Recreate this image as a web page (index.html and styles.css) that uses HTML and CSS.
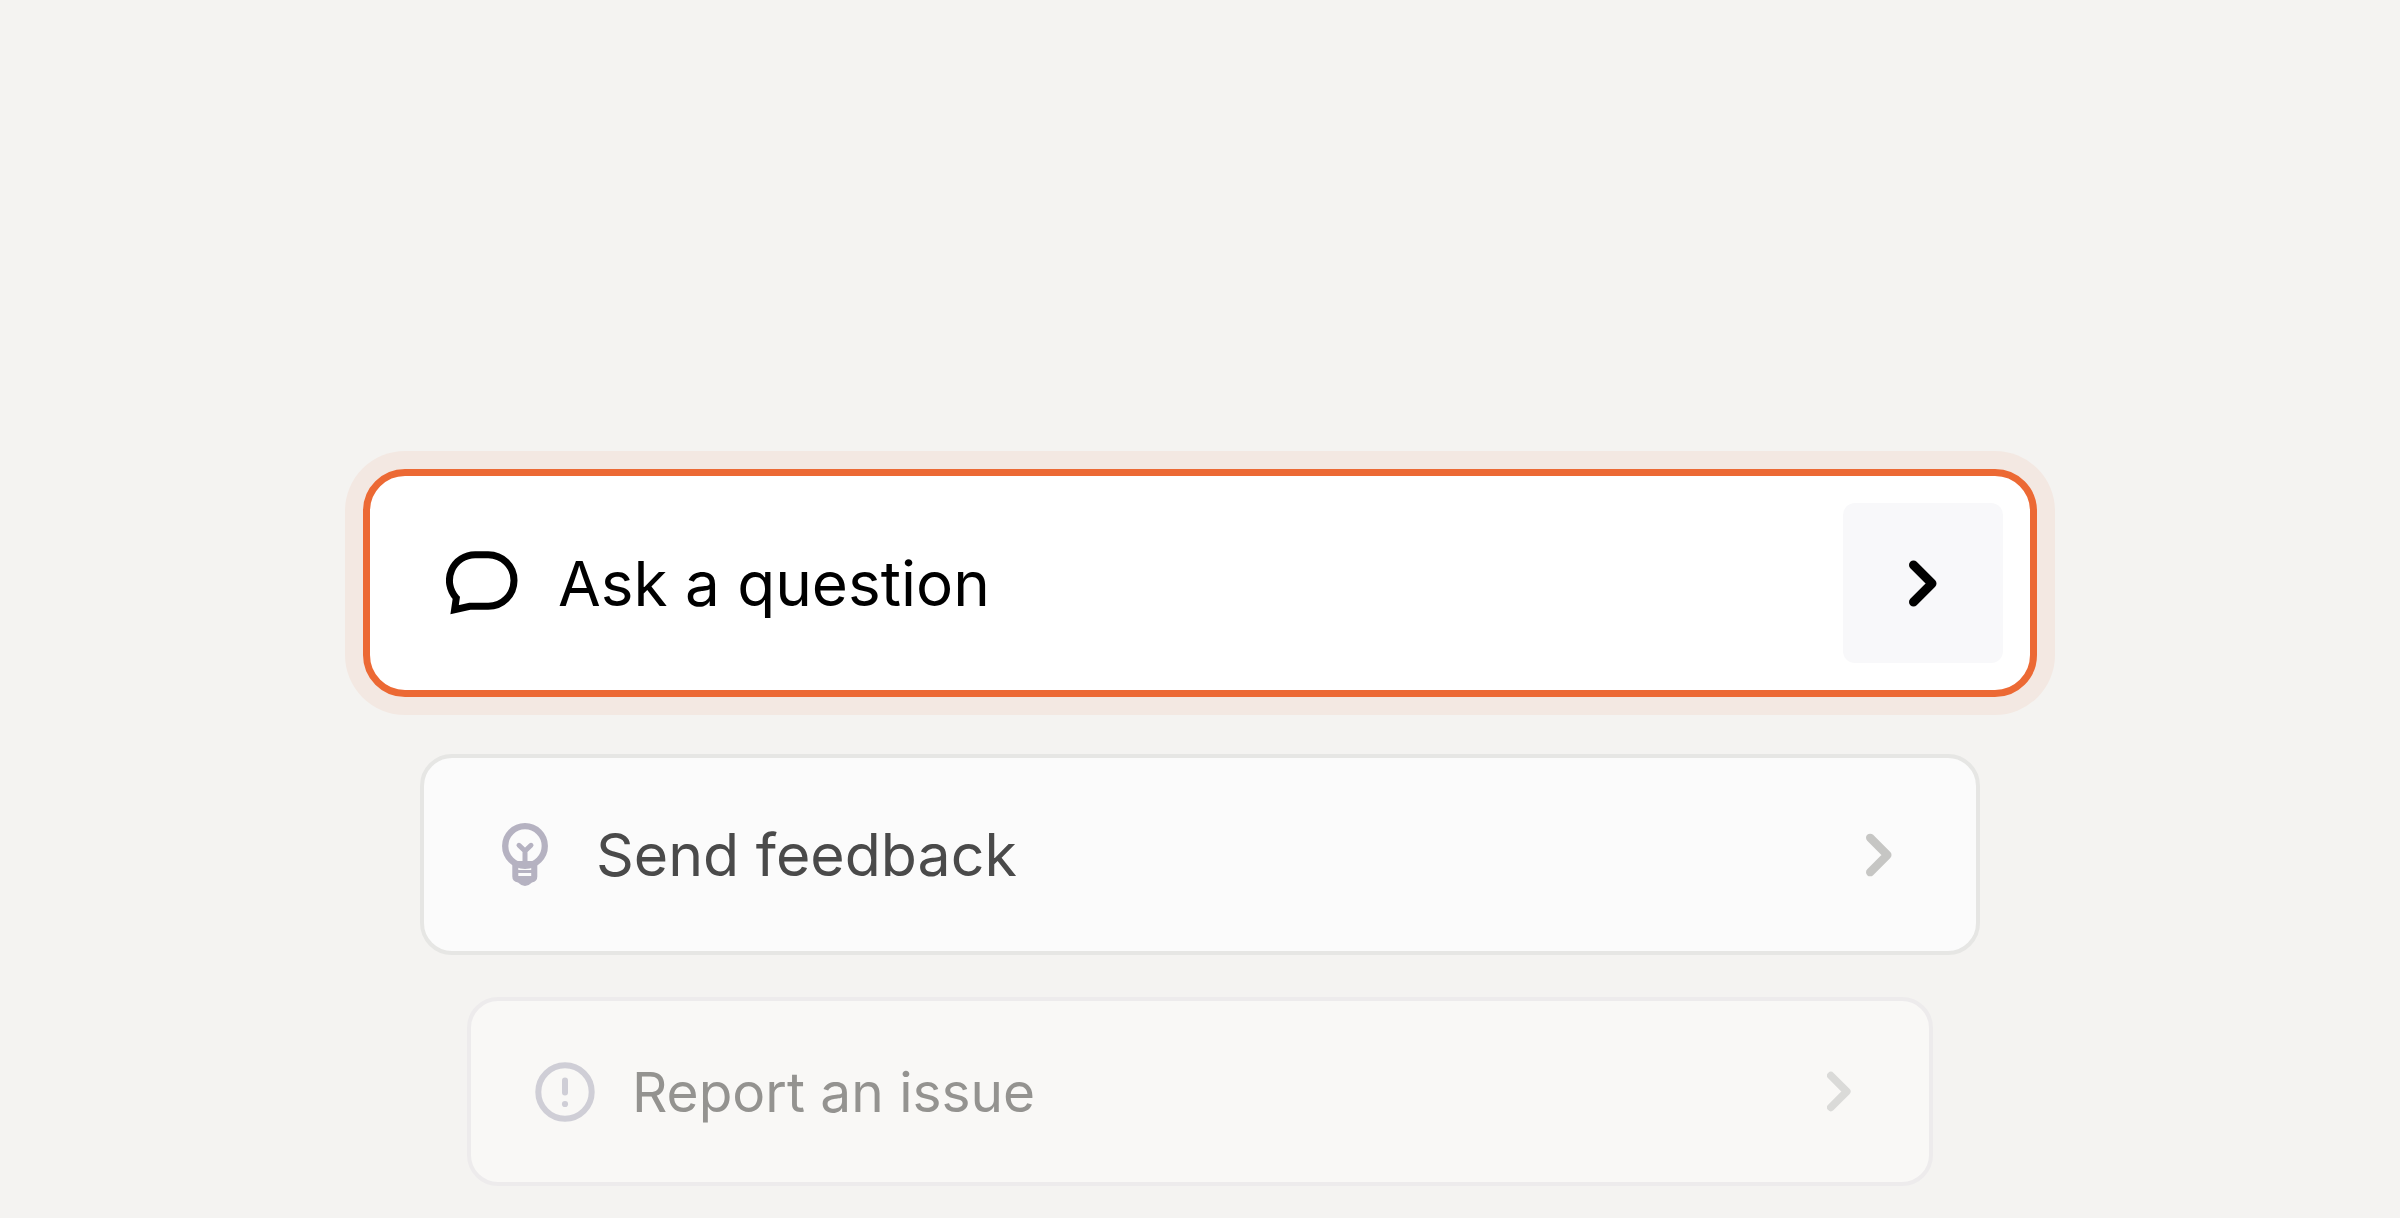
FILE: index.html
```
<!DOCTYPE html>
<html lang="en">
<head>
<meta charset="utf-8">
<meta name="viewport" content="width=device-width, initial-scale=1">
<title>Help menu</title>
<link rel="stylesheet" href="styles.css">
</head>
<body>
<main class="menu">
  <button type="button" class="option option-primary">
    <svg class="icon" width="72" height="64" viewBox="0 0 72 64" fill="none" stroke="currentColor" stroke-width="7" aria-hidden="true">
      <path d="M29.2 3.7H42.2a25.8 25.8 0 0 1 0 51.6H23.7L8.6 58.7 10.3 47A25.8 25.8 0 0 1 29.2 3.7Z"/>
    </svg>
    <span class="label">Ask a question</span>
    <span class="arrow">
      <svg width="28" height="47" viewBox="0 0 28 47" fill="none" stroke="currentColor" stroke-width="9" stroke-linecap="round" stroke-linejoin="round" aria-hidden="true"><path d="M4.5 5 23 23.5 4.5 42"/></svg>
    </span>
  </button>
  <button type="button" class="option option-second">
    <svg class="icon" width="46" height="63" viewBox="0 0 46 63" fill="none" stroke="currentColor" aria-hidden="true">
      <circle cx="23" cy="23" r="19.8" stroke-width="6.3"/>
      <path d="M17 22.3 23 28 29 22.3M23 28V39" stroke-width="5" stroke-linecap="round" stroke-linejoin="round"/>
      <path fill="currentColor" stroke="none" fill-rule="evenodd" d="M10.3 38H35.3V53.5Q35.3 58.5 30 59.5 26.5 63 23 63T16 59.5Q10.3 58.5 10.3 53.5ZM16.3 44V47H29.2V44ZM16.3 50V53H29.2V50Z"/>
    </svg>
    <span class="label">Send feedback</span>
    <span class="arrow">
      <svg width="26" height="44" viewBox="0 0 28 47" fill="none" stroke="currentColor" stroke-width="9" stroke-linecap="round" stroke-linejoin="round" aria-hidden="true"><path d="M4.5 5 23 23.5 4.5 42"/></svg>
    </span>
  </button>
  <button type="button" class="option option-third">
    <svg class="icon" width="60" height="60" viewBox="0 0 60 60" fill="none" stroke="currentColor" stroke-width="6" stroke-linecap="round" aria-hidden="true">
      <circle cx="30" cy="30" r="26.7"/>
      <path d="M30 18.5V30.5"/>
      <circle cx="30" cy="42" r="3.1" fill="currentColor" stroke="none"/>
    </svg>
    <span class="label">Report an issue</span>
    <span class="arrow">
      <svg width="24" height="41" viewBox="0 0 28 47" fill="none" stroke="currentColor" stroke-width="9" stroke-linecap="round" stroke-linejoin="round" aria-hidden="true"><path d="M4.5 5 23 23.5 4.5 42"/></svg>
    </span>
  </button>
</main>
</body>
</html>
```
FILE: styles.css
```
* {
  box-sizing: border-box;
}

body {
  margin: 0;
  background: #f4f3f1;
  font-family: Inter, "Liberation Sans", sans-serif;
  font-optical-sizing: none;
}

.menu {
  display: flex;
  flex-direction: column;
  align-items: center;
  padding: 469px 24px 32px;
}

.option {
  display: flex;
  align-items: center;
  width: 100%;
  margin: 0;
  border: 4px solid;
  font: inherit;
  text-align: left;
  cursor: pointer;
}

.icon {
  flex: none;
}

.label {
  flex: 1;
  color: var(--label);
}

.arrow {
  display: flex;
  align-items: center;
  justify-content: center;
}

.option-primary {
  max-width: 1674px;
  padding: 27px 27px 27px 76px;
  gap: 40px;
  border: 7px solid #ec6934;
  border-radius: 42px;
  background: #fff;
  box-shadow: 0 0 0 18px #f3e8e2;
  color: #000;
  --label: #000;
  font-size: 62px;
}

.option-primary .arrow {
  width: 160px;
  height: 160px;
  border-radius: 12px;
  background: #f8f8fa;
}

.option-second {
  max-width: 1560px;
  min-height: 201px;
  margin-top: 57px;
  padding: 24px 84px 24px 78px;
  gap: 48px;
  border-color: #e6e6e4;
  border-radius: 32px;
  background: #fbfbfb;
  color: #b5b2c1;
  --label: #4a4a4a;
  font-size: 59px;
}

.option-second .arrow {
  color: #c6c6c4;
}

.option-third {
  max-width: 1466px;
  min-height: 189px;
  margin-top: 42px;
  padding: 24px 78px 24px 64px;
  gap: 37px;
  border-color: #edebec;
  border-radius: 31px;
  background: #f9f8f6;
  color: #cfced6;
  --label: #949390;
  font-size: 55px;
}

.option-third .arrow {
  color: #dadad8;
}
```
